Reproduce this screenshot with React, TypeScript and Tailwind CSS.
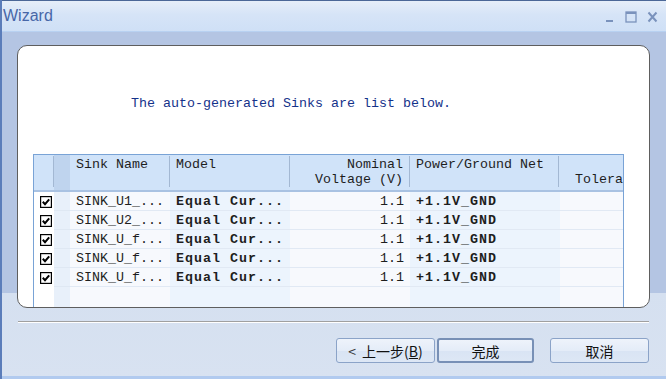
import React from 'react';

const rows = ["SINK_U1_...", "SINK_U2_...", "SINK_U_f...", "SINK_U_f...", "SINK_U_f..."];

const Check = () => (
  <svg width="12" height="12" viewBox="0 0 12 12">
    <rect x="0.5" y="0.5" width="11" height="11" fill="#fff" stroke="#000" strokeWidth="1.4" />
    <path d="M2.8 5.8 L5 8.2 L9.2 3.4" fill="none" stroke="#000" strokeWidth="2" />
  </svg>
);

const Sep = () => <div className="w-px mt-[1px] mb-[3px] bg-[#a3b8d3] shrink-0"></div>;

const Wizard = () => {
  return (
    <div className="w-[666px] h-[379px] flex flex-col border-l-2 border-[#5b7dba] font-['Liberation_Mono',monospace] overflow-hidden">
      {/* title bar */}
      <div className="h-[32px] shrink-0 flex items-center border-t border-[#4b6797] border-b border-b-[#b8d1f1] bg-[linear-gradient(to_bottom,#e6eef9,#d6e4f7_45%,#cfe0f6)]">
        <span className="pl-[1px] text-[16px] text-[#4767a8] font-['Liberation_Sans',sans-serif] leading-none">Wizard</span>
        <div className="ml-auto flex items-center gap-[10px] pr-[8px] pt-[2px]">
          <svg width="10" height="12" viewBox="0 0 10 12">
            <rect x="1" y="9" width="7" height="2" fill="#7a92bc" />
          </svg>
          <svg width="12" height="12" viewBox="0 0 12 12">
            <rect x="1" y="1" width="10" height="10" fill="none" stroke="#7a92bc" strokeWidth="1.3" />
            <rect x="1" y="1" width="10" height="2" fill="#7a92bc" />
          </svg>
          <svg width="11" height="12" viewBox="0 0 11 12">
            <path d="M1.5 1.5 L9.5 10.5 M9.5 1.5 L1.5 10.5" stroke="#7a92bc" strokeWidth="2" />
          </svg>
        </div>
      </div>

      {/* body */}
      <div className="flex-1 flex flex-col bg-[linear-gradient(to_bottom,#b4c5e3_0px,#b4c5e3_261px,#d5e0f0_261px,#d8e2f1)]">
        <div className="mt-[13px] ml-[15px] w-[633px] h-[263px] shrink-0 rounded-[10px] border border-[#5e5e5e] bg-white overflow-hidden flex flex-col">
          <p className="mt-[50px] ml-[113px] text-[13.33px] leading-[16px] text-[#14328a]">
            The auto-generated Sinks are list below.
          </p>

          {/* table */}
          <div className="mt-[42px] ml-[15px] w-[591px] flex-1 flex flex-col border-l border-t border-r border-[#79a3d6] text-[13.33px] text-[#1e1e1e]">
            <div className="h-[35px] flex bg-[#d0e3f9] shrink-0">
              <div className="w-[20px] flex justify-end"><Sep /></div>
              <div className="w-[16px] bg-[#bfd4ee]"></div>
              <div className="w-[100px] flex">
                <div className="flex-1 pl-[6px] pt-[2px] leading-[15px]">Sink Name</div>
                <Sep />
              </div>
              <div className="w-[120px] flex">
                <div className="flex-1 pl-[6px] pt-[2px] leading-[15px]">Model</div>
                <Sep />
              </div>
              <div className="w-[120px] flex">
                <div className="flex-1 pr-[6px] pt-[2px] leading-[15px] text-right whitespace-pre">{"Nominal\nVoltage (V)"}</div>
                <Sep />
              </div>
              <div className="w-[150px] flex">
                <div className="flex-1 pl-[6px] pt-[2px] leading-[15px] whitespace-nowrap">Power/Ground Net</div>
                <div className="w-px mt-[1px] mb-[3px] bg-[#a3b8d3] mr-[1px]"></div>
              </div>
              <div className="w-[63px] overflow-hidden">
                <div className="pl-[15px] pt-[17px] leading-[15px] whitespace-nowrap">Tolerance (%)</div>
              </div>
            </div>
            <div className="h-[2px] bg-[#a9c2e2] shrink-0"></div>

            {rows.map((name, i) => (
              <div key={i} className="h-[19px] flex shrink-0 leading-[16px]">
                <div className="w-[20px] bg-white flex items-center justify-center pl-[3px] pt-[1px] border-b border-white"><Check /></div>
                <div className="w-[16px] bg-[#e8f0fa] border-b border-[#dfe8f3]"></div>
                <div className="w-[100px] bg-[#f7f9fd] pl-[6px] pt-[2px] border-b border-[#e1e9f4] whitespace-nowrap">{name}</div>
                <div className="w-[120px] bg-[#ecf4fd] pl-[6px] pt-[2px] border-b border-[#e1e9f4] font-bold tracking-[1px] whitespace-nowrap">Equal Cur...</div>
                <div className="w-[120px] bg-[#f7f9fd] pr-[6px] pt-[2px] border-b border-[#e1e9f4] text-right">1.1</div>
                <div className="w-[150px] bg-[#ecf4fd] pl-[6px] pt-[2px] border-b border-[#e1e9f4] font-bold tracking-[1px]">+1.1V_GND</div>
                <div className="w-[63px] bg-[#f7f9fd] border-b border-[#e1e9f4]"></div>
              </div>
            ))}
            <div className="flex-1 flex">
              <div className="w-[20px] bg-white"></div>
              <div className="w-[16px] bg-[#e8f0fa]"></div>
              <div className="w-[100px] bg-[#f7f9fd]"></div>
              <div className="w-[120px] bg-[#ecf4fd]"></div>
              <div className="w-[120px] bg-[#f7f9fd]"></div>
              <div className="w-[150px] bg-[#ecf4fd]"></div>
              <div className="w-[63px] bg-[#f7f9fd]"></div>
            </div>
          </div>
        </div>

        {/* separator */}
        <div className="mt-[13px] ml-[16px] w-[631px] h-[2px] border-t border-[#a0a0a0] border-b border-b-white shrink-0"></div>

        {/* buttons */}
        <div className="mt-[15px] flex pl-[334px] font-['Noto_Sans_CJK_SC',sans-serif] text-[14px] text-[#111]">
          <button className="w-[99px] h-[25px] rounded-[3px] border border-[#8ba3c8] bg-[linear-gradient(to_bottom,#eef3fb,#e4ecf8_50%,#d9e4f4_51%,#dde7f5)] flex items-center justify-center leading-none">
            <span className="mr-[6px] text-[#333]">&lt;</span>上一步(<span className="underline">B</span>)
          </button>
          <button className="ml-[2px] w-[97px] h-[25px] rounded-[3px] border-2 border-[#7890b6] bg-[linear-gradient(to_bottom,#eef3fb,#e4ecf8_50%,#d9e4f4_51%,#dde7f5)] flex items-center justify-center leading-none">
            完成
          </button>
          <button className="ml-[16px] w-[99px] h-[25px] rounded-[3px] border border-[#8ba3c8] bg-[linear-gradient(to_bottom,#eef3fb,#e4ecf8_50%,#d9e4f4_51%,#dde7f5)] flex items-center justify-center leading-none">
            取消
          </button>
        </div>

        <div className="mt-auto h-[3px] bg-[#b1caef] shrink-0"></div>
      </div>
    </div>
  );
};

export default function App() {
  return <Wizard />;
}
